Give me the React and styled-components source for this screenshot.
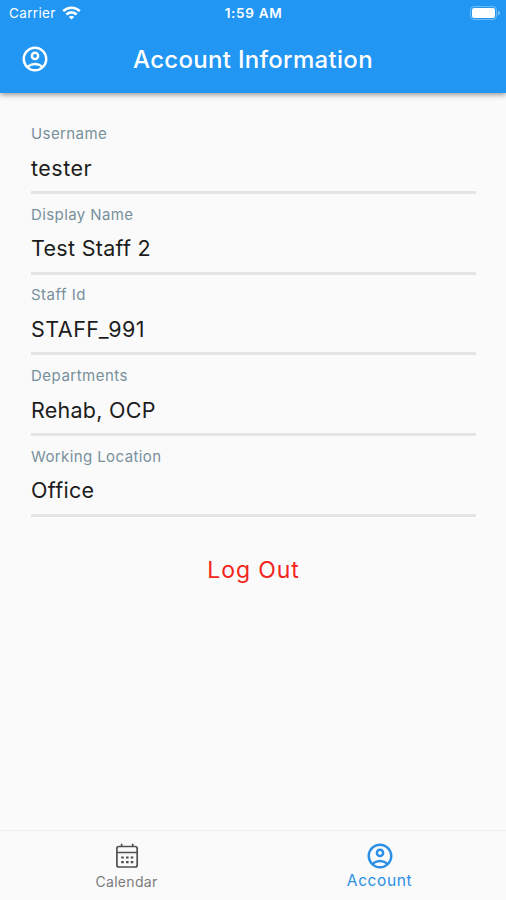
import styled, { createGlobalStyle } from "styled-components";
import { MdOutlineAccountCircle } from "react-icons/md";

const GlobalStyle = createGlobalStyle`
  body {
    margin: 0;
    background: #fafafa;
    font-family: Inter, Roboto, "Liberation Sans", sans-serif;
  }
`;

const Screen = styled.div`
  display: flex;
  flex-direction: column;
  height: 900px;
  overflow: hidden;
  background: #fafafa;
`;

const Header = styled.header`
  height: 93px;
  background: #2196f3;
  color: white;
  box-shadow: 0 2px 5px rgba(0, 0, 0, 0.38);
`;

const StatusBar = styled.div`
  display: grid;
  grid-template-columns: 1fr auto 1fr;
  align-items: center;
  height: 26px;
  padding: 0 5px 0 9px;
  box-sizing: border-box;
  font-size: 13.5px;
  line-height: 26px;
`;

const Carrier = styled.div`
  display: flex;
  align-items: center;
  gap: 6px;
  letter-spacing: 0.35px;
`;

const Time = styled.div`
  margin-right: 3px;
  font-weight: 600;
  letter-spacing: 0.7px;
`;

const Battery = styled.svg`
  justify-self: end;
`;

const TitleBar = styled.div`
  display: grid;
  grid-template-columns: 50px 1fr 50px;
  align-items: center;
  height: 66px;
  padding: 0 19.5px;
`;

const Title = styled.h1`
  margin: 0;
  font-size: 24px;
  font-weight: 500;
  letter-spacing: 0.3px;
  text-align: center;
  white-space: nowrap;
`;

const Content = styled.main`
  flex: 1;
  padding: 31px 30px 0 31px;
`;

const Field = styled.div`
  height: 80.7px;
  box-sizing: border-box;
`;

const Label = styled.div`
  font-size: 15px;
  line-height: 20px;
  letter-spacing: ${(props) => props.$spacing}px;
  color: #78909c;
`;

const Value = styled.div`
  margin-top: 8.5px;
  height: 38.5px;
  border-bottom: 3px solid #e4e4e4;
  font-size: 21.5px;
  line-height: 30px;
  letter-spacing: ${(props) => props.$spacing}px;
  color: #1c1c1c;
`;

const LogOut = styled.button`
  display: block;
  margin: 25px auto 0;
  padding: 0;
  border: none;
  background: none;
  color: #f3241c;
  font-family: inherit;
  font-size: 23px;
  line-height: 36px;
  letter-spacing: 0.9px;
`;

const TabBar = styled.nav`
  display: flex;
  height: 70px;
  box-sizing: border-box;
  border-top: 1px solid #eeeeee;
`;

const Tab = styled.div`
  flex: 1;
  display: flex;
  flex-direction: column;
  align-items: center;
  padding-top: 10px;
  color: ${(props) => (props.$active ? "#2b8fe6" : "#7b7b7b")};
  font-size: ${(props) => (props.$active ? 15.5 : 14)}px;
  line-height: ${(props) => (props.$active ? 20 : 22)}px;
  letter-spacing: ${(props) => (props.$active ? 0.6 : 0.3)}px;

  svg {
    flex: none;
  }
`;

const fields = [
  { label: "Username", value: "tester", labelSpacing: 0.4, spacing: 0.5 },
  { label: "Display Name", value: "Test Staff 2", labelSpacing: 0.4, spacing: 0.3 },
  { label: "Staff Id", value: "STAFF_991", labelSpacing: 0.5, spacing: 0.5 },
  { label: "Departments", value: "Rehab, OCP", labelSpacing: 0.5, spacing: 0.25 },
  { label: "Working Location", value: "Office", labelSpacing: 0.4, spacing: 0.3 },
];

function WifiIcon() {
  return (
    <svg width="19" height="14" viewBox="0 0 19 14" fill="none" stroke="white" strokeWidth="2.6">
      <path d="M1.2 5.2a11.7 11.7 0 0 1 16.6 0" />
      <path d="M4.4 8.5a7.2 7.2 0 0 1 10.2 0" />
      <path d="M9.5 13.6 6.9 11a3.7 3.7 0 0 1 5.2 0z" fill="white" stroke="none" />
    </svg>
  );
}

function BatteryIcon() {
  return (
    <Battery width="31" height="14" viewBox="0 0 31 14">
      <rect x="0.5" y="0.5" width="26" height="13" rx="3.5" fill="none" stroke="white" strokeOpacity="0.35" />
      <rect x="2" y="2" width="23" height="10" rx="2" fill="white" />
      <path d="M28 4.7c2.6 0.8 2.6 3.8 0 4.6z" fill="white" fillOpacity="0.45" />
    </Battery>
  );
}

function CalendarIcon() {
  return (
    <svg width="30" height="30" viewBox="0 0 30 30" fill="none" stroke="#505050" strokeWidth="1.7">
      <rect x="4.9" y="5.5" width="20.3" height="20.5" rx="2" />
      <path d="M5 11.5h20.3M9.6 2.8v3M20.7 2.8v3" />
      <path d="M9.2 16.5h2.6M14 16.5h2.6M18.7 16.5h2.6M9.2 21.2h2.6M14 21.2h2.6M18.7 21.2h2.6" strokeWidth="2.2" />
    </svg>
  );
}

export default function App() {
  return (
    <Screen>
      <GlobalStyle />
      <Header>
        <StatusBar>
          <Carrier>
            Carrier
            <WifiIcon />
          </Carrier>
          <Time>1:59 AM</Time>
          <BatteryIcon />
        </StatusBar>
        <TitleBar>
          <MdOutlineAccountCircle size={30} />
          <Title>Account Information</Title>
        </TitleBar>
      </Header>
      <Content>
        {fields.map((field) => (
          <Field key={field.label}>
            <Label $spacing={field.labelSpacing}>{field.label}</Label>
            <Value $spacing={field.spacing}>{field.value}</Value>
          </Field>
        ))}
        <LogOut>Log Out</LogOut>
      </Content>
      <TabBar>
        <Tab>
          <CalendarIcon />
          Calendar
        </Tab>
        <Tab $active>
          <MdOutlineAccountCircle size={30} />
          Account
        </Tab>
      </TabBar>
    </Screen>
  );
}
